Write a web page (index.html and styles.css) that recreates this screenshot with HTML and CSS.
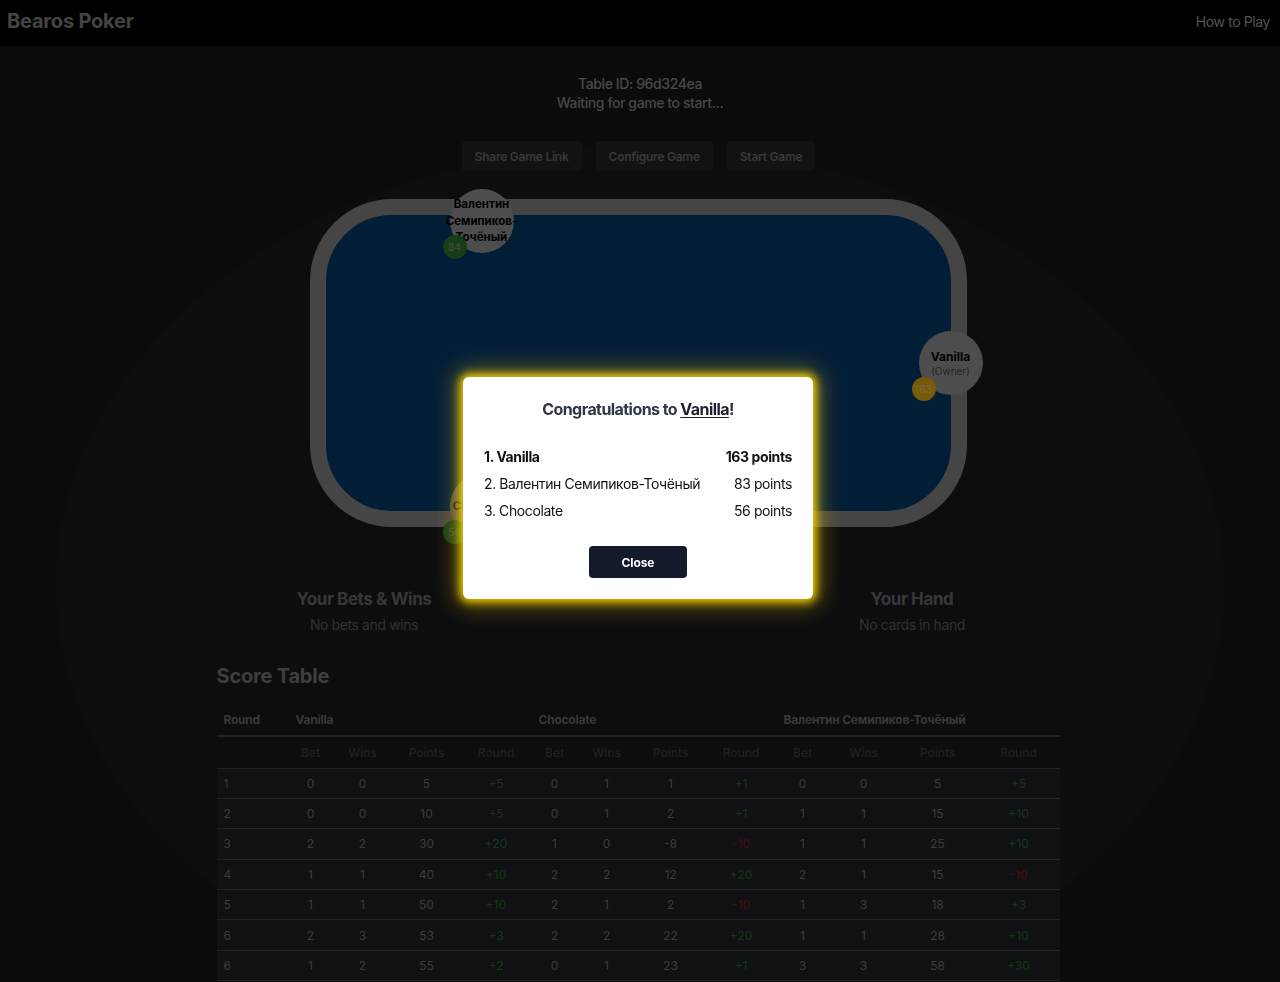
FILE: index.html
```html
<!DOCTYPE html>
<html lang="en">
<head>
<meta charset="utf-8">
<title>Bearos Poker</title>
<link rel="stylesheet" href="styles.css">
</head>
<body>
<header class="topbar">
  <div class="brand">Bearos Poker</div>
  <a class="nav-link" href="#">How to Play</a>
</header>

<main class="room">
  <div class="table-info">
    <div class="table-id">Table ID: 96d324ea</div>
    <div class="status">Waiting for game to start...</div>
  </div>

  <div class="actions">
    <button class="btn">Share Game Link</button>
    <button class="btn">Configure Game</button>
    <button class="btn">Start Game</button>
  </div>

  <div class="poker-table">
    <div class="seat seat-top">
      <div class="seat-name">Валентин Семипиков-Точёный</div>
      <span class="chip chip-green">84</span>
    </div>
    <div class="seat seat-right">
      <div class="seat-name">Vanilla</div>
      <div class="seat-role">(Owner)</div>
      <span class="chip chip-gold">163</span>
    </div>
    <div class="seat seat-bottom">
      <div class="seat-name">Chocolate</div>
      <span class="chip chip-green">56</span>
    </div>
  </div>

  <section class="panels">
    <div class="panel">
      <h3 class="panel-title">Your Bets &amp; Wins</h3>
      <p class="panel-empty">No bets and wins</p>
    </div>
    <div class="panel"></div>
    <div class="panel">
      <h3 class="panel-title">Your Hand</h3>
      <p class="panel-empty">No cards in hand</p>
    </div>
  </section>

  <section class="scores">
    <h2 class="scores-title">Score Table</h2>
    <table class="score-table">
      <colgroup>
        <col class="c71"><col class="c46"><col class="c58"><col class="c70"><col class="c69">
        <col class="c48"><col class="c56"><col class="c72"><col class="c69">
        <col class="c54"><col class="c68"><col class="c80"><col class="c82">
      </colgroup>
      <thead>
        <tr class="head-players">
          <th class="th-round">Round</th>
          <th colspan="4">Vanilla</th>
          <th colspan="4">Chocolate</th>
          <th colspan="4">Валентин Семипиков-Точёный</th>
        </tr>
        <tr class="head-sub">
          <th></th>
          <th>Bet</th><th>Wins</th><th>Points</th><th>Round</th>
          <th>Bet</th><th>Wins</th><th>Points</th><th>Round</th>
          <th>Bet</th><th>Wins</th><th>Points</th><th>Round</th>
        </tr>
      </thead>
      <tbody>
        <tr><td class="rn">1</td><td>0</td><td>0</td><td>5</td><td class="up">+5</td><td>0</td><td>1</td><td>1</td><td class="up">+1</td><td>0</td><td>0</td><td>5</td><td class="up">+5</td></tr>
        <tr><td class="rn">2</td><td>0</td><td>0</td><td>10</td><td class="up">+5</td><td>0</td><td>1</td><td>2</td><td class="up">+1</td><td>1</td><td>1</td><td>15</td><td class="up">+10</td></tr>
        <tr><td class="rn">3</td><td>2</td><td>2</td><td>30</td><td class="up">+20</td><td>1</td><td>0</td><td>-8</td><td class="down">-10</td><td>1</td><td>1</td><td>25</td><td class="up">+10</td></tr>
        <tr><td class="rn">4</td><td>1</td><td>1</td><td>40</td><td class="up">+10</td><td>2</td><td>2</td><td>12</td><td class="up">+20</td><td>2</td><td>1</td><td>15</td><td class="down">-10</td></tr>
        <tr><td class="rn">5</td><td>1</td><td>1</td><td>50</td><td class="up">+10</td><td>2</td><td>1</td><td>2</td><td class="down">-10</td><td>1</td><td>3</td><td>18</td><td class="up">+3</td></tr>
        <tr><td class="rn">6</td><td>2</td><td>3</td><td>53</td><td class="up">+3</td><td>2</td><td>2</td><td>22</td><td class="up">+20</td><td>1</td><td>1</td><td>28</td><td class="up">+10</td></tr>
        <tr><td class="rn">6</td><td>1</td><td>2</td><td>55</td><td class="up">+2</td><td>0</td><td>1</td><td>23</td><td class="up">+1</td><td>3</td><td>3</td><td>58</td><td class="up">+30</td></tr>
      </tbody>
    </table>
  </section>
</main>

<div class="backdrop">
  <div class="modal" role="dialog">
    <h2 class="modal-title">Congratulations to <span class="winner">Vanilla</span>!</h2>
    <ol class="ranking">
      <li class="rank rank-first"><span>1. Vanilla</span><span>163 points</span></li>
      <li class="rank"><span>2. Валентин Семипиков-Точёный</span><span>83 points</span></li>
      <li class="rank"><span>3. Chocolate</span><span>56 points</span></li>
    </ol>
    <button class="close-btn">Close</button>
  </div>
</div>
</body>
</html>
```

FILE: styles.css
```css
* { box-sizing: border-box; }

html, body {
  margin: 0;
  padding: 0;
}

body {
  font-family: Inter, "Noto Sans", "Liberation Sans", sans-serif;
  letter-spacing: -0.025em;
  background: #15171b;
  color: #969696;
  min-height: 982px;
  overflow: hidden;
}

.topbar {
  height: 46px;
  background: #000;
  display: flex;
  align-items: center;
  justify-content: space-between;
  padding: 0 10px 4px 7px;
}

.brand {
  font-size: 20px;
  font-weight: 700;
  color: #888888;
  letter-spacing: -0.2px;
}

.nav-link {
  font-size: 14px;
  color: #a4a4a4;
  text-decoration: none;
}

.room {
  padding-top: 28px;
  min-height: 936px;
  background: radial-gradient(ellipse 585px 440px at 640px 540px, #181a1f 99.5%, #15171b 100%);
}

.table-info {
  text-align: center;
  font-size: 14px;
  line-height: 19px;
  font-weight: 500;
  color: #929292;
}

.status {
  color: #8c8c8c;
}

.actions {
  display: flex;
  justify-content: center;
  gap: 14px;
  margin-top: 29px;
  padding-right: 3px;
}

.btn {
  font-family: inherit;
  letter-spacing: -0.02em;
  font-size: 12px;
  font-weight: 600;
  color: #707070;
  background: #22252b;
  border: none;
  border-radius: 4px;
  height: 30px;
  padding: 0 13px;
}

.poker-table {
  position: relative;
  width: 657px;
  height: 328px;
  margin: 28px auto 0;
  left: -2px;
  border: 16px solid #8a8a8a;
  border-radius: 82px;
  background: #053a6c;
}

.seat {
  position: absolute;
  width: 64px;
  height: 64px;
  border-radius: 50%;
  background: #9a9a9a;
  display: flex;
  flex-direction: column;
  align-items: center;
  justify-content: center;
  text-align: center;
  color: #000;
}

.seat-top { left: 124px; top: -26px; }
.seat-right { left: 593px; top: 116px; }
.seat-bottom { left: 124px; top: 259px; }

.seat-name {
  font-size: 11.5px;
  font-weight: 700;
  line-height: 16.5px;
  width: 80px;
  flex-shrink: 0;
  letter-spacing: 0;
}

.seat-right .seat-name {
  font-size: 12px;
  line-height: 15px;
}

.seat-role {
  font-size: 10px;
  line-height: 14px;
  color: #4a4a4a;
  letter-spacing: 0;
}

.chip {
  position: absolute;
  left: -7px;
  top: 46px;
  width: 24px;
  height: 24px;
  border-radius: 50%;
  display: flex;
  align-items: center;
  justify-content: center;
  font-size: 10px;
  font-weight: 600;
  letter-spacing: 0;
}

.chip-green { background: #2f7a31; color: #6e9a70; }
.chip-gold { background: #eeb314; color: #f6cc60; }

.panels {
  display: grid;
  grid-template-columns: 1fr 1fr 1fr;
  width: 822px;
  margin: 60px auto 0;
  position: relative;
  left: -2px;
  text-align: center;
}

.panel-title {
  margin: 0;
  font-size: 17px;
  line-height: 24px;
  font-weight: 700;
  color: #6e6e6e;
}

.panel-empty {
  margin: 4px 0 0;
  font-size: 14px;
  line-height: 20px;
  color: #626262;
}

.scores {
  width: 843px;
  margin: 28px auto 0;
  position: relative;
  left: -2px;
}

.scores-title {
  margin: 0;
  font-size: 20px;
  line-height: 26px;
  font-weight: 700;
  color: #7c7c7c;
  letter-spacing: -0.01em;
}

.score-table {
  margin-top: 15px;
  width: 843px;
  table-layout: fixed;
  border-collapse: collapse;
  font-size: 12px;
  letter-spacing: 0;
}

.c46 { width: 46px; } .c48 { width: 48px; } .c54 { width: 54px; }
.c56 { width: 56px; } .c58 { width: 58px; } .c68 { width: 68px; }
.c69 { width: 69px; } .c70 { width: 70px; } .c71 { width: 71px; }
.c72 { width: 72px; } .c80 { width: 80px; } .c82 { width: 82px; }

.head-players th {
  height: 32px;
  text-align: left;
  padding: 0 0 0 8px;
  font-weight: 700;
  color: #707070;
  letter-spacing: -0.02em;
  border-bottom: 2px solid #42444a;
}

.head-players .th-round { padding-left: 7px; }

.head-sub th {
  height: 32px;
  font-weight: 500;
  color: #3e4044;
  text-align: center;
  border-bottom: 1px solid #42444a;
}

.score-table tbody tr {
  height: 30.4px;
  background: #202227;
  border-bottom: 1px solid #46484e;
}

.score-table td {
  text-align: center;
  color: #787878;
  padding: 0;
}

.score-table td.rn {
  text-align: left;
  padding-left: 7px;
}

.score-table td.up { color: #2c6a30; }
.score-table td.down { color: #901818; }

.backdrop {
  position: fixed;
  inset: 0;
  background: rgba(0, 0, 0, 0.5);
  display: flex;
  align-items: center;
  justify-content: center;
  padding: 0 4px 6px 0;
}

.modal {
  width: 350px;
  background: #fff;
  border-radius: 6px;
  padding: 20px 21px 21px;
  text-align: center;
  box-shadow: 0 0 8px 3px rgba(255, 214, 0, 0.95), 0 0 22px 8px rgba(240, 200, 0, 0.4);
}

.modal-title {
  margin: 0;
  font-size: 16px;
  line-height: 24px;
  font-weight: 700;
  color: #2d3748;
  letter-spacing: -0.035em;
}

.winner {
  text-decoration: underline;
  text-underline-offset: 2px;
  color: #1a202c;
}

.ranking {
  list-style: none;
  margin: 22px 0 0;
  padding: 0;
  font-size: 14px;
  color: #111;
}

.rank {
  display: flex;
  justify-content: space-between;
  line-height: 27px;
}

.rank-first { font-weight: 700; }

.close-btn {
  margin-top: 22px;
  width: 98px;
  height: 32px;
  border: none;
  border-radius: 4px;
  background: #131a2b;
  color: #fff;
  font-family: inherit;
  font-size: 12px;
  font-weight: 700;
  letter-spacing: -0.01em;
}
```
